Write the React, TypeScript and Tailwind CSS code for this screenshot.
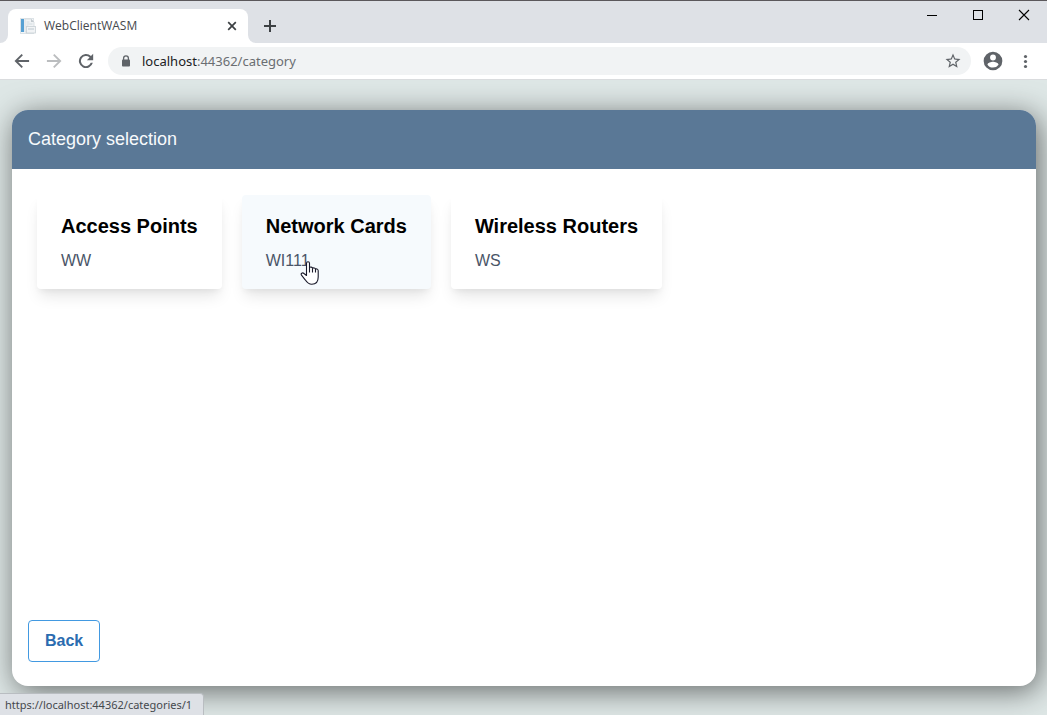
import React from "react";

type Category = { id: number; name: string; code: string; active?: boolean };

const categories: Category[] = [
  { id: 0, name: "Access Points", code: "WW" },
  { id: 1, name: "Network Cards", code: "WI111", active: true },
  { id: 2, name: "Wireless Routers", code: "WS" },
];

function FavIcon() {
  return (
    <svg className="h-4 w-4 shrink-0" viewBox="0 0 16 16" aria-hidden="true">
      <rect x="0.5" y="0.5" width="13" height="15" fill="#f3f6f8" stroke="#dde3e7" />
      <rect x="1" y="1" width="3" height="13" fill="#56a0d3" />
      <path d="M5 1h6l3 3v10H5z" fill="#f0f3f5" stroke="#d3d9dd" strokeWidth="0.8" />
      <path d="M11 1l3 3h-3z" fill="#c3cacf" />
      <path d="M6.5 4h3M6.5 6h6M6.5 8h2" stroke="#cbd5db" strokeWidth="0.8" />
      <rect x="6.5" y="8.5" width="9" height="6.5" fill="#f1f3f5" stroke="#c8d0d5" strokeWidth="0.8" />
      <path d="M8 11h6" stroke="#b7c4cc" strokeWidth="0.9" />
    </svg>
  );
}

function TabStrip() {
  return (
    <header className="flex h-[43px] items-start justify-between border-t border-[#5b585b] bg-[#dee1e6]">
      <div className="flex">
        <div className="h-[42px] w-2 bg-white">
          <div className="h-full rounded-br-lg bg-[#dee1e6]" />
        </div>
        <div className="flex h-[42px] w-60 items-end bg-[#dee1e6]">
          <div className="flex h-[34px] w-full items-center rounded-t-lg bg-white pr-2 pl-3">
            <FavIcon />
            <span className="ml-2 flex-1 text-[12px] leading-4 text-[#45484d]">WebClientWASM</span>
            <button aria-label="Close tab" className="flex h-4 w-4 items-center justify-center">
              <svg className="h-4 w-4" viewBox="0 0 16 16" stroke="#3c4043" strokeWidth="1.7">
                <path d="M4.2 4.2l7.6 7.6M11.8 4.2l-7.6 7.6" />
              </svg>
            </button>
          </div>
        </div>
        <div className="h-[42px] w-2 bg-white">
          <div className="h-full rounded-bl-lg bg-[#dee1e6]" />
        </div>
        <button aria-label="New tab" className="mt-4 ml-2 h-[18px] w-3">
          <svg className="h-[18px] w-3" viewBox="0 0 12 18" stroke="#3c4043" strokeWidth="2">
            <path d="M0 9h12M6 3v12" />
          </svg>
        </button>
      </div>
      <div className="flex">
        <button aria-label="Minimize" className="flex h-7 w-[46px] items-center justify-center">
          <svg className="h-3 w-3" viewBox="0 0 12 12" shapeRendering="crispEdges">
            <path d="M1 6h10v1H1z" fill="#000" />
          </svg>
        </button>
        <button aria-label="Maximize" className="flex h-7 w-[46px] items-center justify-center">
          <svg className="h-3 w-3" viewBox="0 0 12 12" shapeRendering="crispEdges">
            <rect x="1.5" y="1.5" width="9" height="9" fill="none" stroke="#000" />
          </svg>
        </button>
        <button aria-label="Close" className="flex h-7 w-[46px] items-center justify-center">
          <svg className="h-3 w-3" viewBox="0 0 12 12" stroke="#000" strokeWidth="1.1">
            <path d="M1 1l10 10M11 1L1 11" />
          </svg>
        </button>
      </div>
    </header>
  );
}

function Toolbar() {
  return (
    <nav className="flex h-[37px] items-center border-b border-[#dadcde] bg-white px-3">
      <div className="flex gap-3">
        <button aria-label="Back">
          <svg className="h-5 w-5" viewBox="0 0 24 24" fill="#5f6368">
            <path d="M20.5 10.8H7.4l5.7-5.7L11.5 3.5 3 12l8.5 8.5 1.6-1.6L7.4 13.2h13.1z" />
          </svg>
        </button>
        <button aria-label="Forward">
          <svg className="h-5 w-5" viewBox="0 0 24 24" fill="#bbbdbf">
            <path d="M3.5 10.8h13.1l-5.7-5.7L12.5 3.5 21 12l-8.5 8.5-1.6-1.6 5.7-5.7H3.5z" />
          </svg>
        </button>
        <button aria-label="Reload">
          <svg className="h-5 w-5" viewBox="0 0 24 24" fill="#5f6368">
            <path d="M18 6A8.5 8.5 0 1 0 20.2 14.2h-2.5A6.1 6.1 0 1 1 16.3 7.7L13 11h7.6V3.4z" />
          </svg>
        </button>
      </div>
      <div className="ml-3 flex h-7 flex-1 items-center rounded-full bg-[#f1f3f4] pr-[9px] pl-3">
        <svg className="h-3 w-3 shrink-0" viewBox="0 0 12 12" aria-hidden="true">
          <path d="M3.6 5V3.2a2.4 2.4 0 0 1 4.8 0V5" fill="none" stroke="#5f6368" strokeWidth="1.3" />
          <rect x="2" y="4.4" width="8" height="7.1" rx="0.9" fill="#5f6368" />
        </svg>
        <a
          href="#category"
          className="ml-[10px] flex-1 font-['Noto_Sans','Open_Sans',sans-serif] text-[13px] leading-5 text-[#6a6e72]"
        >
          <span className="text-[#202124]">localhost</span>:44362/category
        </a>
        <button aria-label="Bookmark this page">
          <svg className="h-[18px] w-[18px]" viewBox="0 0 24 24" fill="#5f6368">
            <path d="M22 9.24l-7.19-.62L12 2 9.19 8.63 2 9.24l5.46 4.73L5.82 21 12 17.27 18.18 21l-1.63-7.03L22 9.24zM12 15.4l-3.76 2.27 1-4.28-3.32-2.88 4.38-.38L12 6.1l1.71 4.04 4.38.38-3.32 2.88 1 4.28L12 15.4z" />
          </svg>
        </button>
      </div>
      <button aria-label="Profile" className="ml-[11px]">
        <svg className="h-[22px] w-[22px]" viewBox="0 0 24 24" fill="#5f6368">
          <path d="M12 1.8a10.2 10.2 0 1 0 0 20.4 10.2 10.2 0 0 0 0-20.4zm0 3.2a3.2 3.2 0 1 1 0 6.4A3.2 3.2 0 0 1 12 5zm0 14.2a7.2 7.2 0 0 1-6-3.22c.03-1.99 4-3.08 6-3.08s5.97 1.09 6 3.08a7.2 7.2 0 0 1-6 3.22z" />
        </svg>
      </button>
      <button aria-label="Menu" className="ml-[11px]">
        <svg className="h-5 w-5" viewBox="0 0 20 20" fill="#5f6368">
          <circle cx="10.5" cy="5.5" r="1.6" />
          <circle cx="10.5" cy="10.5" r="1.6" />
          <circle cx="10.5" cy="15.5" r="1.6" />
        </svg>
      </button>
    </nav>
  );
}

function HandCursor() {
  return (
    <svg className="pointer-events-none absolute top-[66px] left-[58px] h-6 w-5" viewBox="0 0 20 24" aria-hidden="true">
      <path
        d="M6.5 14.5V2.2C6.5 .2 9.5 .2 9.5 2.2V6.6C10.3 5.7 12.3 6 12.5 7.2 13.5 6.5 15.2 6.9 15.5 8 16.8 7.5 18.2 8.2 18.2 9.8V16C18.2 20.5 15.8 23.3 11.8 23.3 8.3 23.3 6.8 21.3 5.2 18.8L1.5 14.2C.2 12.3 2.6 11.2 4 12.5z"
        fill="#fff"
        stroke="#1a1a2a"
        strokeWidth="1.1"
        strokeLinejoin="round"
      />
      <path d="M9.5 6.5v5M12.5 7.2v4.3M15.5 8v3.5" stroke="#1a1a2a" strokeWidth="1.1" />
    </svg>
  );
}

function CategoryCard({ category }: { category: Category }) {
  return (
    <a
      href={`#categories/${category.id}`}
      className={`relative rounded px-6 py-4 shadow-[0_10px_15px_-3px_rgba(0,0,0,0.1),0_4px_6px_-2px_rgba(0,0,0,0.05)] ${
        category.active ? "bg-[#f6fafd]" : "bg-white"
      }`}
    >
      <h2 className="mb-2 text-[20px] leading-[30px] font-bold text-black">{category.name}</h2>
      <p className="text-[16px] leading-6 text-[#4a5568]">{category.code}</p>
      {category.active && <HandCursor />}
    </a>
  );
}

export default function App() {
  return (
    <div className="relative flex min-h-screen flex-col bg-[#dee7e6] font-['Open_Sans','Noto_Sans',sans-serif]">
      <TabStrip />
      <Toolbar />
      <div className="flex flex-1 overflow-hidden pt-[30px] pr-[11px] pb-[29px] pl-3 font-['Liberation_Sans',Arial,sans-serif]">
        <main className="flex flex-1 flex-col rounded-2xl bg-white shadow-[3px_5px_30px_rgba(0,0,0,0.55)]">
          <h1 className="rounded-t-2xl bg-[#5a7896] px-4 py-4 text-[18px] leading-[27px] text-[#f7fafc]">
            Category selection
          </h1>
          <div className="flex flex-1 flex-wrap content-start gap-5 px-[25px] pt-[26px]">
            {categories.map((category) => (
              <CategoryCard key={category.id} category={category} />
            ))}
          </div>
          <div className="px-4 pb-6">
            <button className="rounded border border-[#4299e1] px-4 py-2 text-[16px] leading-6 font-bold text-[#2b6cb0]">
              Back
            </button>
          </div>
        </main>
      </div>
      <div className="absolute bottom-0 left-0 rounded-tr border-t border-r border-[#b9bdc1] bg-[#dee1e6] pt-px pr-[11px] pl-[5px] font-['Noto_Sans','Open_Sans',sans-serif] text-[11px] leading-5 text-[#45484d]">
        https://localhost:44362/categories/1
      </div>
    </div>
  );
}
